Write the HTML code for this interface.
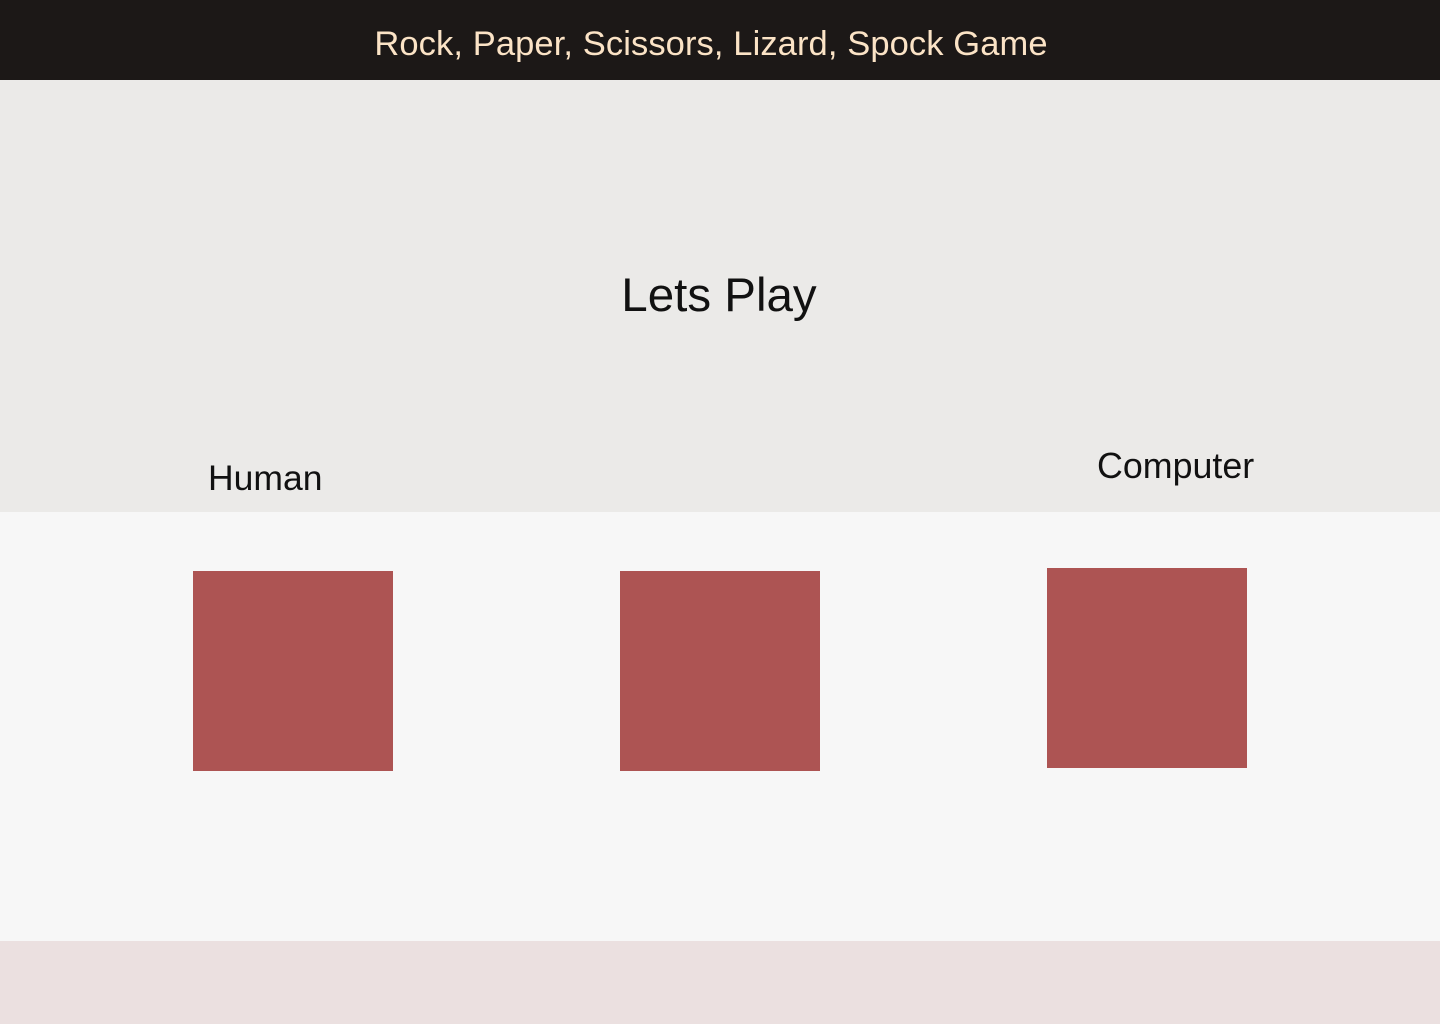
<!DOCTYPE html>
<html><head><meta charset="utf-8"><style>
html,body{margin:0;padding:0;width:1440px;height:1024px;overflow:hidden;font-family:"Liberation Sans",sans-serif;}
.hdr{position:absolute;left:0;top:0;width:1440px;height:80px;background:#1c1817;}
.hdr span{position:absolute;left:-9px;width:1440px;top:2px;color:#fbe3c6;font-size:34.5px;text-align:center;line-height:84px;letter-spacing:0.1px;}
.top{position:absolute;left:0;top:80px;width:1440px;height:432px;background:#ebeae8;}
.mid{position:absolute;left:0;top:512px;width:1440px;height:429px;background:#f7f7f7;}
.bot{position:absolute;left:0;top:941px;width:1440px;height:83px;background:#ebe0e0;}
.t{position:absolute;color:#111;white-space:nowrap;}
.sq{position:absolute;width:200px;height:200px;background:#ad5453;}
</style></head><body>
<div class="hdr"><span>Rock, Paper, Scissors, Lizard, Spock Game</span></div>
<div class="top"></div><div class="mid"></div><div class="bot"></div>
<div class="t" style="left:-1px;width:1440px;text-align:center;top:268px;font-size:47.5px;">Lets Play</div>
<div class="t" style="left:208px;top:458px;font-size:35.5px;">Human</div>
<div class="t" style="left:1097px;top:446px;font-size:35.8px;">Computer</div>
<div class="sq" style="left:193px;top:571px"></div>
<div class="sq" style="left:620px;top:571px"></div>
<div class="sq" style="left:1047px;top:568px"></div>
</body></html>
